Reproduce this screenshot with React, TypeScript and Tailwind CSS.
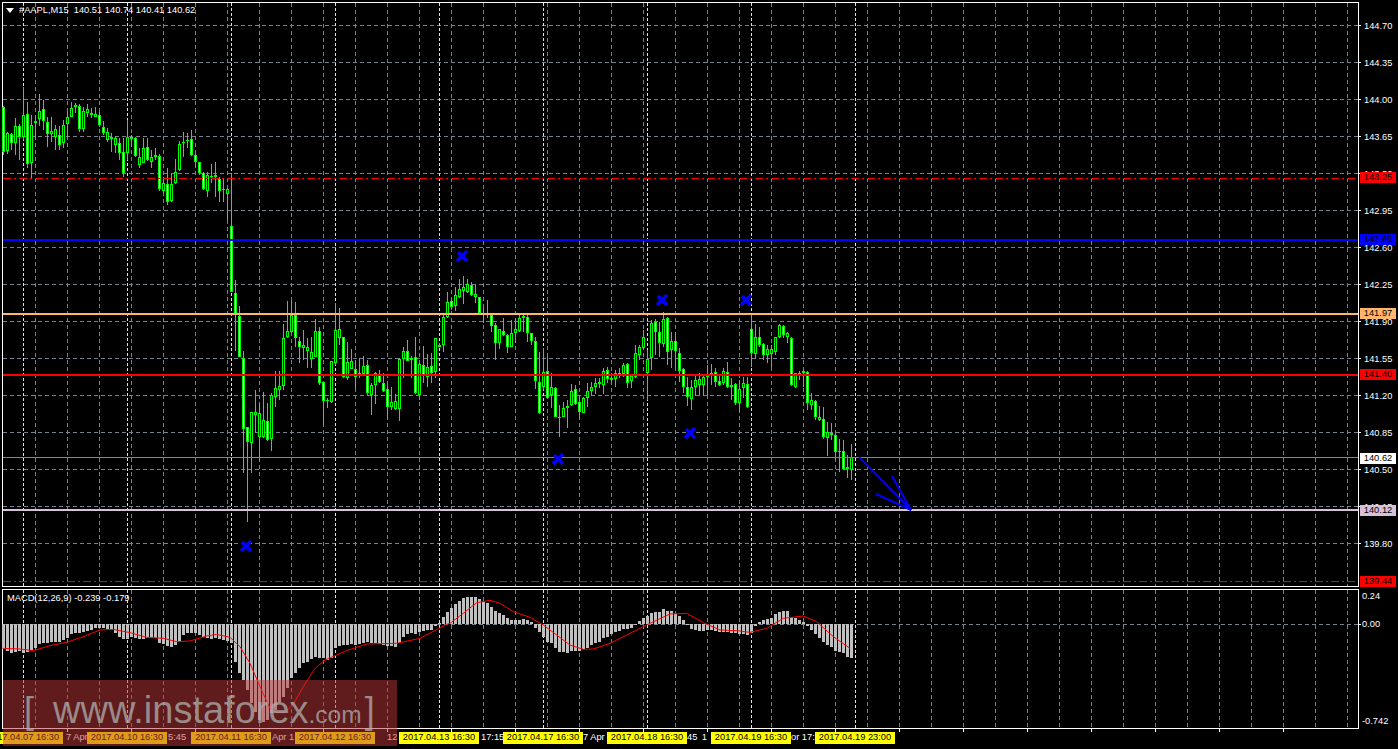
import React from "react";

type C = [number, number, number, number, number?];
// body top, body bottom, wick top, wick bottom (3x zoom coordinates), filled flag
const A: C[] = [[320,455,318,465,1],[400,452,395,462],[403,428,400,450,1],[377,430,355,465],[378,410,372,480,1],[346,412,262,420],[343,493,305,505,1],[376,488,345,535],[362,370,345,420,1],[334,358,282,378],[328,362,300,390,1],[365,403,352,440,1],[392,403,352,425],[388,410,375,450],[406,434,378,450,1],[374,430,360,445],[352,372,335,410],[324,350,305,352],[316,322,310,340],[318,386,312,395,1],[334,388,320,395],[328,338,312,350],[340,346,325,355],[343,351,322,352],[346,376,335,380,1],[380,400,362,405,1],[396,420,385,425],[412,416,400,455],[414,434,408,460],[430,460,415,480,1],[457,520,415,530,1],[412,458,360,480],[410,417,405,440],[414,467,412,470,1],[470,494,445,505],[445,488,415,490],[442,480,415,482,1],[472,485,450,505],[466,470,445,480],[468,568,462,572,1],[550,572,532,578],[552,605,505,615,1],[552,602,520,605],[515,550,478,552],[432,510,422,512],[426,430,396,470],[420,424,400,445],[418,465,390,468,1],[466,485,462,500,1],[487,520,485,525,1],[520,568,515,570,1],[526,572,515,590],[528,530,492,550],[526,532,485,590],[536,572,530,605,1],[568,570,535,605],[568,582,565,660],[678,876,520,876,1]];
const B: C[] = [[190,256,150,362,1],[258,380,228,380,1],[385,598,363,730,1],[592,635,590,875,1],[546,638,545,730],[546,554,480,610],[550,620,522,692],[570,622,485,625],[574,630,518,632,1],[496,626,490,662],[475,500,423,530],[468,480,423,510],[325,467,282,480],[302,322,212,325],[256,305,210,308],[254,325,215,350,1],[332,350,320,398,1],[346,355,300,390],[352,364,325,415],[367,387,320,415],[302,380,267,380],[304,460,292,465,1],[457,512,455,585,1],[510,514,505,535],[394,515,392,520],[301,400,220,405],[298,325,235,345],[322,442,320,445,1],[396,445,335,450],[394,416,358,418],[418,442,390,477,1],[428,438,385,445],[408,432,378,435],[405,490,390,495,1],[465,494,460,555],[428,464,425,522],[432,455,420,460,1],[458,482,430,485,1],[478,532,466,568,1],[516,530,470,540],[514,536,492,540],[388,538,385,572],[364,386,352,445],[362,392,330,392,1],[385,390,378,445],[380,490,322,492,1],[403,494,395,510],[406,437,348,458,1],[412,442,372,472],[408,430,368,458,1],[325,426,323,445],[346,350,340,352],[260,346,255,365],[215,262,185,265],[212,230,205,240,1],[196,228,172,243],[176,200,148,205],[172,182,138,222],[163,186,146,190],[165,196,156,198,1],[193,200,162,220],[202,250,200,252,1],[248,252,232,278],[248,252,210,265],[256,288,254,305,1],[284,338,280,390,1],[298,340,296,358],[302,314,265,318,1],[316,352,312,368,1],[310,350,270,352],[298,308,265,340],[265,302,255,305],[259,263,255,305],[262,308,255,335,1],[310,332,308,345,1],[334,452,320,477,1],[455,548,365,552,1]];
const D: C[] = [[275,320,205,330],[272,355,230,358,1],[322,345,280,385],[325,410,320,412,1],[411,413,375,470],[385,410,365,412],[377,383,360,445],[332,375,312,378],[328,372,315,375,1],[367,395,345,418,1],[355,398,352,400],[334,353,310,380],[322,332,305,345],[308,320,295,342],[305,313,295,325],[274,316,265,342],[271,296,260,310,1],[295,299,280,310],[280,298,270,320],[278,282,265,295],[256,282,250,290],[253,308,250,325,1],[288,304,285,325],[220,292,195,295],[202,224,195,240],[170,205,150,210],[238,280,210,360],[130,235,120,270],[125,155,118,225,1],[157,190,125,230,1],[118,193,97,200],[115,215,112,255,1],[182,210,155,265],[184,214,155,270,1],[218,272,205,305,1],[268,320,265,340,1],[322,352,290,378,1],[320,356,300,390],[300,322,285,348],[298,314,280,345],[292,316,285,348],[288,292,255,345],[278,284,252,315],[275,305,265,320,1],[302,314,285,318,1],[272,310,265,315],[275,322,247,325,1],[316,320,295,360],[313,370,310,375,1],[328,369,300,395],[310,325,292,355],[313,382,290,385,1],[148,220,105,260,1],[172,223,132,238],[170,196,140,200,1],[193,226,190,240,1],[206,224,195,248],[208,222,195,260],[172,217,170,225],[134,170,132,175],[137,164,135,175,1],[160,172,157,190],[175,316,172,318,1],[280,320,278,325],[278,284,272,300],[274,278,270,320],[275,370,272,390,1],[360,374,340,390],[364,410,360,420,1],[412,420,378,423],[416,472,380,478,1],[455,475,425,528],[458,464,428,480],[466,515,462,540,1],[513,517,478,575],[512,566,480,570,1],[562,566,525,595],[532,570,492,600]];

const candles = [
  ...A.map((c) => ({ c, base: 0 })),
  ...B.map((c) => ({ c, base: 230 })),
  ...D.map((c) => ({ c, base: 280 })),
];

// histogram ends, 3x zoom coordinates, zero at 132
const hist = [208,214,218,215,214,218,216,210,205,192,190,188,187,187,186,180,175,163,160,158,155,152,150,145,145,143,148,150,160,170,177,176,172,175,177,176,175,175,175,188,192,198,201,195,185,165,160,158,160,165,170,175,176,175,176,180,183,190,245,280,300,330,370,395,420,425,420,400,390,365,350,325,295,280,265,250,245,238,232,235,235,240,235,205,198,196,196,193,195,192,190,185,190,190,192,195,198,198,202,190,170,162,158,162,155,152,150,150,138,130,110,95,85,72,62,55,51,51,51,58,65,68,80,92,100,105,115,120,120,120,118,120,125,143,155,172,185,190,205,215,217,218,213,213,212,208,205,195,190,185,175,170,162,155,152,148,147,145,135,124,115,108,100,96,96,87,93,94,102,108,120,135,148,150,152,153,150,150,153,155,155,155,158,160,162,163,165,160,138,125,120,117,113,103,97,93,93,112,115,120,125,138,150,163,175,187,195,200,213,215,220,232,233];

const sigA = [[8,205],[60,207],[100,212],[150,197],[200,187],[250,170],[300,150],[340,148],[390,158],[440,172],[490,175],[530,185],[570,183],[620,168],[650,163],[690,172],[720,200],[750,250],[780,320],[810,385],[830,398],[855,398],[880,372],[910,320],[945,265],[975,240],[1040,212],[1100,192],[1190,190],[1260,175],[1340,133]];
const sigB = [[0,130],[40,100],[80,68],[120,61],[150,70],[190,95],[240,112],[280,135],[320,165],[360,195],[400,208],[430,207],[480,190],[540,160],[600,130],[660,102],[710,100],[760,128],[810,150],[860,152],[900,157],[950,145],[1000,115],[1060,108],[1100,125],[1150,170],[1200,205]];
const signal = [...sigA.map(([x, y]) => `${x / 3},${580 + y / 3}`), ...sigB.map(([x, y]) => `${450 + x / 3},${580 + y / 3}`)].join(" ");

const vGrid = Array.from({ length: 42 }, (_, k) => 35.5 + 32 * k);
const yellow = Array.from({ length: 9 }, (_, k) => 23.5 + 104 * k);
const hGrid = Array.from({ length: 15 }, (_, k) => 25.5 + 37 * k);
const ticks = Array.from({ length: 20 }, (_, k) => 67.5 + 64 * k);
const xs: [number, number][] = [[462, 256], [662, 300], [746, 300], [246, 546], [558, 459], [690, 433]];

const GRID = "#77818f";

function VLines({ y1, y2 }: { y1: number; y2: number }) {
  return (
    <g>
      {vGrid.map((x) => (
        <line key={x} x1={x} x2={x} y1={y1} y2={y2} stroke={GRID} strokeDasharray="4 3" />
      ))}
      {yellow.map((x) => (
        <line key={x} x1={x} x2={x} y1={y1} y2={y2} stroke="#ffff00" strokeDasharray="3 2" />
      ))}
    </g>
  );
}

const priceLabels = ["144.70","144.35","144.00","143.65","143.30","142.95","142.60","142.25","141.90","141.55","141.20","140.85","140.50","140.15","139.80"];

function PriceTag({ className, label }: { className: string; label: string }) {
  return (
    <div className={`absolute left-[1px] w-[36px] h-[11px] flex items-center justify-center text-black ${className}`}>{label}</div>
  );
}

function TimeTag({ label }: { label: string }) {
  return (
    <div className="w-[80px] shrink-0 h-[12px] bg-[#ffff00] text-black flex items-center justify-center whitespace-nowrap">{label}</div>
  );
}

function Fragment({ children, className = "" }: { children: React.ReactNode; className?: string }) {
  return (
    <div className={`w-[24px] shrink-0 h-[12px] overflow-hidden whitespace-nowrap flex items-center text-white ${className}`}>{children}</div>
  );
}

export default function App() {
  return (
    <div className="relative w-[1398px] h-[749px] overflow-hidden bg-black pl-[2px] pt-[2px] font-['Liberation_Sans',Arial,sans-serif] text-[9.3px] leading-none text-white">
      {/* Price pane */}
      <div className="flex h-[585px]">
        <div className="relative w-[1357px] border border-white">
          <svg className="block overflow-visible" width={1355} height={583} viewBox="3 3 1355 583" shapeRendering="crispEdges">
            {hGrid.map((y) => (
              <line key={y} x1={3} x2={1358} y1={y} y2={y} stroke={GRID} strokeDasharray="4 3" />
            ))}
            {hGrid.map((y) => (
              <line key={y} x1={1358} x2={1361} y1={y} y2={y} stroke="#fff" />
            ))}
            <VLines y1={3} y2={586} />
            {candles.map(({ c, base }, i) => {
              const [bt, bb, wt, wb, f] = c;
              const y = (v: number) => base + v / 3;
              const top = y(bt);
              const h = Math.max(y(bb) - top, 1);
              return (
                <g key={i}>
                  <rect x={3 + 4 * i} y={y(wt)} width={1} height={y(wb) - y(wt)} fill="#00ff00" />
                  <rect x={2 + 4 * i} y={top} width={3} height={h} fill="#00ff00" />
                  {h > 2 && <rect x={3 + 4 * i} y={top + 1} width={1} height={h - 2} fill={f ? "#ffffff" : "#000000"} />}
                </g>
              );
            })}
            <line x1={3} x2={1358} y1={178.5} y2={178.5} stroke="#ff0000" strokeDasharray="8 3 2 3" />
            <line x1={3} x2={1358} y1={240} y2={240} stroke="#0000ff" strokeWidth={2} />
            <line x1={3} x2={1358} y1={314} y2={314} stroke="#ffb56b" strokeWidth={2} />
            <line x1={3} x2={1358} y1={375} y2={375} stroke="#ff0000" strokeWidth={2} />
            <line x1={3} x2={1358} y1={457.5} y2={457.5} stroke="#808896" />
            <line x1={3} x2={1358} y1={510} y2={510} stroke="#d8c0d8" strokeWidth={2} />
            <line x1={3} x2={1358} y1={581.5} y2={581.5} stroke="#ff0000" strokeDasharray="8 3 2 3" />
            <g shapeRendering="auto" stroke="#0000ff" fill="none">
              {xs.map(([x, y]) => (
                <g key={x} strokeWidth={3.6}>
                  <line x1={x - 4} y1={y - 4} x2={x + 5} y2={y + 5} />
                  <line x1={x + 5} y1={y - 5} x2={x - 5} y2={y + 5} />
                </g>
              ))}
              <g strokeWidth={2}>
                <line x1={859} y1={457} x2={911} y2={510} />
                <line x1={876} y1={494} x2={911} y2={510} />
                <line x1={892} y1={476} x2={911} y2={510} />
              </g>
            </g>
          </svg>
          <div className="absolute left-[3px] top-[3px] flex items-center gap-[5px] whitespace-pre">
            <svg width={8} height={5} viewBox="0 0 8 5"><path d="M0 0h8L4 5z" fill="#fff" /></svg>
            <span>#AAPL,M15  140.51 140.74 140.41 140.62</span>
          </div>
        </div>
        <div className="relative w-[39px] pl-[5px] pt-[6px]">
          {priceLabels.map((p) => (
            <div key={p} className="h-[37px] flex items-center">{p}</div>
          ))}
          <PriceTag className="top-[170px] bg-[#ff0000]" label="143.25" />
          <PriceTag className="top-[232px] bg-[#0000ff]" label="142.66" />
          <PriceTag className="top-[306px] bg-[#ffb56b]" label="141.97" />
          <PriceTag className="top-[367px] bg-[#ff0000]" label="141.40" />
          <PriceTag className="top-[451px] bg-[#ffffff]" label="140.62" />
          <PriceTag className="top-[503px] bg-[#d8c0d8]" label="140.12" />
          <PriceTag className="top-[574px] bg-[#ff0000]" label="139.44" />
        </div>
      </div>

      {/* MACD pane */}
      <div className="flex h-[140px] mt-[2px]">
        <div className="relative w-[1357px] border border-white">
          <svg className="block overflow-visible" width={1355} height={138} viewBox="3 590 1355 138" shapeRendering="crispEdges">
            <line x1={3} x2={1358} y1={624.5} y2={624.5} stroke={GRID} strokeDasharray="4 3" />
            <line x1={1358} x2={1361} y1={624.5} y2={624.5} stroke="#fff" />
            <VLines y1={590} y2={728} />
            {ticks.map((x) => (
              <line key={x} x1={x} x2={x} y1={728} y2={732} stroke="#fff" />
            ))}
            {hist.map((v, i) => {
              const y = 580 + v / 3;
              return <rect key={i} x={2 + 4 * i} y={Math.min(y, 624)} width={3} height={Math.abs(y - 624)} fill="#c0c0c0" />;
            })}
            <polyline points={signal} fill="none" stroke="#ff0000" strokeWidth={1} shapeRendering="auto" />
          </svg>
          <div className="absolute left-[4px] top-[4px] whitespace-pre">MACD(12,26,9) -0.239 -0.179</div>
        </div>
        <div className="w-[39px] pl-[3px] pt-[1px]">
          <div className="h-[14px] flex items-center">0.24</div>
          <div className="h-[14px] flex items-center mt-[14px]">0.00</div>
          <div className="h-[14px] flex items-center mt-[83px]">-0.742</div>
        </div>
      </div>

      {/* Time axis */}
      <div className="flex items-start pt-[3px] ml-[-19px]">
        <TimeTag label="2017.04.07 16:30" />
        <Fragment className="pl-[3px]">7 Apr</Fragment>
        <TimeTag label="2017.04.10 16:30" />
        <Fragment className="pl-[1px]">5:45</Fragment>
        <TimeTag label="2017.04.11 16:30" />
        <Fragment className="pl-[1px]">Apr 1</Fragment>
        <TimeTag label="2017.04.12 16:30" />
        <Fragment className="pl-[12px]">12</Fragment>
        <TimeTag label="2017.04.13 16:30" />
        <Fragment className="pl-[2px]">17:15</Fragment>
        <TimeTag label="2017.04.17 16:30" />
        <Fragment>7 Apr</Fragment>
        <TimeTag label="2017.04.18 16:30" />
        <Fragment className="justify-between pr-[4px]"><span>45</span><span>1</span></Fragment>
        <TimeTag label="2017.04.19 16:30" />
        <Fragment>or 17:</Fragment>
        <TimeTag label="2017.04.19 23:00" />
      </div>

      {/* Watermark */}
      <div className="absolute left-[3px] top-[680px] w-[394px] h-[66px] bg-[rgba(192,56,56,0.5)] flex items-baseline pl-[21px] pt-[10px] text-[rgba(175,175,175,0.75)] whitespace-pre">
        <span className="text-[36px] leading-[40px]">[</span>
        <span className="ml-[19px] text-[38px] leading-[40px]">www.instaforex</span>
        <span className="text-[24.5px] leading-[40px]">.com</span>
        <span className="ml-[3px] text-[36px] leading-[40px]">]</span>
      </div>
    </div>
  );
}
